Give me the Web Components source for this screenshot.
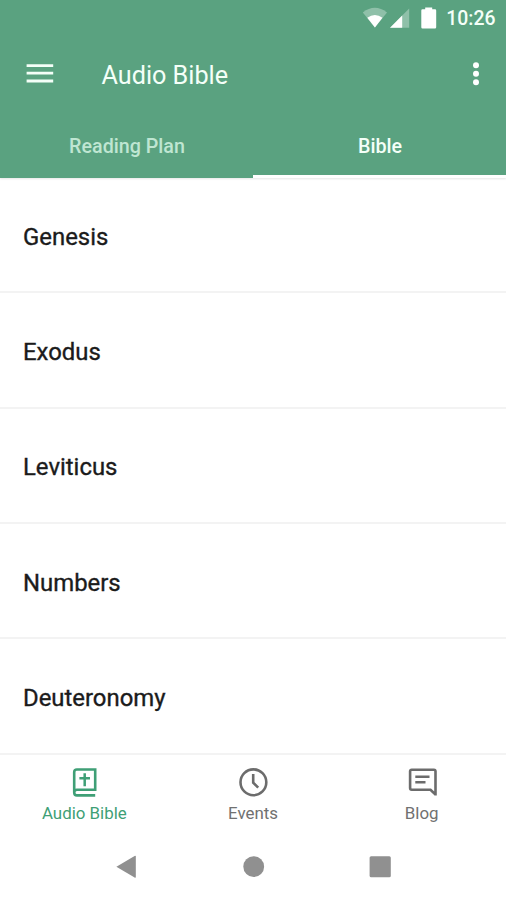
<!DOCTYPE html>
<html lang="en">
<head>
<meta charset="utf-8">
<title>Audio Bible</title>
<style>
html,body{margin:0;height:100%;background:#fff}
body{font-family:Roboto,"Liberation Sans",sans-serif;overflow:hidden}
</style>
</head>
<body>
<audio-bible-app></audio-bible-app>
<script>
const define = (name, html) => {
  const t = document.createElement('template');
  t.innerHTML = html;
  customElements.define(name, class extends HTMLElement {
    constructor() {
      super();
      this.attachShadow({ mode: 'open' }).append(t.content.cloneNode(true));
    }
  });
};

define('status-bar', `
<style>
:host{display:flex;height:37px;align-items:center;justify-content:flex-end;padding-right:10.5px;box-sizing:border-box;color:#f4fff8;font-size:19.4px;font-weight:500;line-height:37px}
svg{display:block;flex:none}
span{margin-left:9px}
</style>
<svg width="75" height="37" viewBox="0 0 75 37">
  <path d="M0.8 12.5Q12.8 3.2 25 12.5L12.9 27.5Z" fill="#fff" opacity=".32"/>
  <path d="M5.3 17.8Q12.9 12.4 20.5 17.8L12.9 27.5Z" fill="#fff"/>
  <path d="M28 27.7L47.2 8.6V27.7Z" fill="#fff" opacity=".32"/>
  <path d="M28 27.7L40.2 15.6V27.7Z" fill="#fff"/>
  <path d="M60.5 9.3h2.7V7.6h7v1.7H73q1.2 0 1.2 1.2v16.7q0 1.3-1.2 1.3H60.5q-1.2 0-1.2-1.3V10.5q0-1.2 1.2-1.2z" fill="#fff"/>
</svg>
<span>10:26</span>`);

define('app-bar', `
<style>
:host{display:flex;height:77px;align-items:center;box-sizing:border-box;padding:0 25px 3px 26px;color:#f4fff8}
h1{font-size:25.2px;font-weight:400;line-height:30px;margin:4px 0 0 47.5px;flex:1}
svg{display:block}
</style>
<svg width="28" height="22" viewBox="0 0 28 22"><path d="M.6 2.6H27.2M.6 10.2H27.2M.6 18H27.2" stroke="#f4fff8" stroke-width="2.8"/></svg>
<h1><slot></slot></h1>
<svg width="10" height="26" viewBox="0 0 10 26" fill="#fff"><circle cx="5" cy="4.2" r="3"/><circle cx="5" cy="12.7" r="3"/><circle cx="5" cy="21.2" r="3"/></svg>`);

define('tab-item', `
<style>
:host{display:flex;flex:1;align-items:center;justify-content:center;box-sizing:border-box;font-size:19.7px;font-weight:500;color:#bfe6d2;padding:4px 0 0 1px;border-bottom:3px solid transparent}
:host([selected]){color:#f4fff8;border-bottom-color:#fff}
</style>
<span><slot></slot></span>`);

define('tab-bar', `
<style>:host{display:flex;height:64px}</style><slot></slot>`);

define('app-header', `
<style>:host{display:block;background:#5aa280;height:178px;flex:none;box-shadow:0 1px 2px rgba(0,0,0,.1);position:relative}</style><slot></slot>`);

define('book-row', `
<style>
:host{display:flex;flex:1;align-items:center;padding:4px 23px 0;box-sizing:border-box;border-bottom:2px solid #f3f3f3;font-size:23.9px;font-weight:400;-webkit-text-stroke:.35px #1b1b1b;color:#1b1b1b}
</style>
<span><slot></slot></span>`);

define('book-list', `
<style>:host{display:flex;flex-direction:column;height:576.6px;flex:none}</style><slot></slot>`);

define('nav-item', `
<style>
:host{display:flex;flex:1;flex-direction:column;align-items:center;color:#717171;font-size:16.9px;line-height:20px;padding-top:10.4px;box-sizing:border-box}
:host([selected]){color:#3f9f76}
::slotted(svg){display:block;width:34px;height:34px;margin-bottom:4px}
</style>
<slot name="icon"></slot><span><slot></slot></span>`);

define('bottom-nav', `
<style>:host{display:flex;height:80.4px;flex:none}</style><slot></slot>`);

define('system-nav', `
<style>:host{display:flex;height:65px;flex:none;justify-content:center}svg{display:block}</style>
<svg width="506" height="65" viewBox="0 0 506 65" fill="#909090">
  <path d="M116.4 31.8L134.6 21Q135.8 20.4 135.8 21.6V42Q135.8 43.2 134.6 42.6Z"/>
  <circle cx="253.7" cy="31.7" r="10.4"/>
  <rect x="369.6" y="21.3" width="21.2" height="21" rx="1.5"/>
</svg>`);

define('audio-bible-app', `
<style>:host{display:flex;flex-direction:column;width:506px;height:900px;background:#fff}</style>
<app-header>
  <status-bar></status-bar>
  <app-bar>Audio Bible</app-bar>
  <tab-bar><tab-item>Reading Plan</tab-item><tab-item selected>Bible</tab-item></tab-bar>
</app-header>
<book-list>
  <book-row>Genesis</book-row><book-row>Exodus</book-row><book-row>Leviticus</book-row><book-row>Numbers</book-row><book-row>Deuteronomy</book-row>
</book-list>
<bottom-nav>
  <nav-item selected><svg slot="icon" viewBox="0 0 34 34" fill="none" stroke="#3f9f76" stroke-width="2.6"><path d="M28.2 30.4H9.9Q7.2 30.4 7.2 27.2V7.2Q7.2 4.5 9.9 4.5H28.2V24.7H9.9Q7.2 24.7 7.2 27.6"/><path d="M17.7 8.2V21.2M12.4 13.2H23" stroke-width="2.5"/></svg>Audio Bible</nav-item>
  <nav-item><svg slot="icon" viewBox="0 0 34 34" fill="none" stroke="#6c6c6c" stroke-width="2.6"><circle cx="17.4" cy="17.3" r="12.9"/><path d="M17.2 9V17.6L22.2 22.6"/></svg>Events</nav-item>
  <nav-item><svg slot="icon" viewBox="0 0 34 34" fill="none" stroke="#6c6c6c" stroke-width="2.6"><path d="M30.5 30.5V6.3Q30.5 4.7 28.9 4.7H6.7Q5.1 4.7 5.1 6.3V23Q5.1 24.7 6.7 24.7H25.5L30.5 29.5"/><path d="M10.3 11.7H24.5M10.3 17.3H20.5"/></svg>Blog</nav-item>
</bottom-nav>
<system-nav></system-nav>`);
</script>
</body>
</html>
